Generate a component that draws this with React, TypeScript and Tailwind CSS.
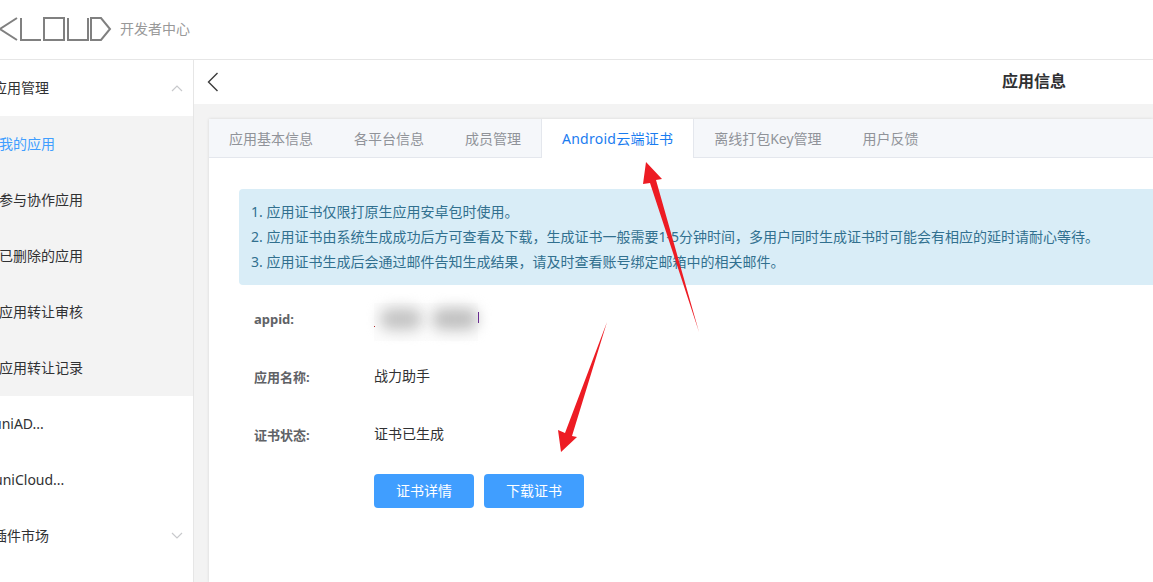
const menuRows = [
  { label: "我的应用", active: true },
  { label: "参与协作应用" },
  { label: "已删除的应用" },
  { label: "应用转让审核" },
  { label: "应用转让记录" },
];

const tabs = ["应用基本信息", "各平台信息", "成员管理", "Android云端证书", "离线打包Key管理", "用户反馈"];

function Logo() {
  return (
    <svg width="112" height="26" viewBox="0 0 112 26" fill="none" stroke="#808080" strokeWidth="2" className="shrink-0">
      <path d="M17 2 L0 13 L17 24" />
      <path d="M21 2 V24 H41" />
      <path d="M44 2 H64 V24 H44 Z" />
      <path d="M68 2 V24 H88 V2" />
      <path d="M91 2 H101 L110 13 L101 24 H91 Z" />
    </svg>
  );
}

function Chevron({ up }: { up?: boolean }) {
  return (
    <svg width="12" height="8" viewBox="0 0 12 8" fill="none" stroke="#c8c9cc" strokeWidth="1.2">
      <path d={up ? "M1 7 L6 2 L11 7" : "M1 1 L6 6 L11 1"} />
    </svg>
  );
}

function SideItem({ label, left = -1, chevron }: { label: string; left?: number; chevron?: "up" | "down" }) {
  return (
    <div className="h-14 flex items-center justify-between pr-[10px] text-sm text-[#303133]">
      <span style={{ marginLeft: left }}>{label}</span>
      {chevron && <Chevron up={chevron === "up"} />}
    </div>
  );
}

function InfoRow({ label, children }: { label: string; children: React.ReactNode }) {
  return (
    <div className="h-[58px] flex items-center">
      <div className="w-[135px] pl-[15px] text-[13px] font-bold text-[#606266]">{label}</div>
      <div className="text-sm text-[#303133] -translate-y-[2px]">{children}</div>
    </div>
  );
}

export default function App() {
  return (
    <div
      className="relative w-[1153px] h-[582px] overflow-hidden bg-white"
      style={{ fontFamily: '"Noto Sans", "Noto Sans CJK SC", sans-serif' }}
    >
      {/* Header */}
      <header className="h-[60px] flex items-center border-b border-[#e6e6e6] pb-[1px]">
        <Logo />
        <span className="ml-[8px] text-sm text-[#999999]">开发者中心</span>
      </header>

      <div className="flex h-[522px]">
        {/* Sidebar */}
        <aside className="w-[194px] shrink-0 border-r border-[#e6e6e6]">
          <SideItem label="应用管理" left={-7} chevron="up" />
          <div className="bg-[#f3f3f3]">
            {menuRows.map((row) => (
              <div
                key={row.label}
                className={`h-14 flex items-center -ml-[1px] pb-[1px] text-sm ${row.active ? "text-[#409eff]" : "text-[#303133]"}`}
              >
                {row.label}
              </div>
            ))}
          </div>
          <SideItem label="uniAD..." left={-7} />
          <SideItem label="uniCloud..." left={-6} />
          <SideItem label="插件市场" left={-7} chevron="down" />
        </aside>

        {/* Main */}
        <main className="flex-1 bg-[#f3f3f3]">
          <div className="relative h-[44px] bg-white flex items-center justify-end pr-[87px]">
            <svg className="absolute left-[13px] top-[12px]" width="12" height="20" viewBox="0 0 12 20" fill="none" stroke="#3c3c3c" strokeWidth="1.4">
              <path d="M10.5 1 L1.5 10 L10.5 19" />
            </svg>
            <span className="-translate-y-[1px] text-base font-bold text-[#303133]">应用信息</span>
          </div>

          <div className="ml-[15px] mt-[15px] h-[463px] bg-white shadow-[0_0_3px_rgba(0,0,0,0.12)]">
            <div className="h-[39px] flex bg-[#f5f7fa] border-b border-[#e4e7ed]">
              {tabs.map((tab) => (
                <div
                  key={tab}
                  className={
                    tab === "Android云端证书"
                      ? "h-[39px] -ml-[1px] px-[20px] pt-[1px] flex items-center text-sm tracking-[0.25px] text-[#1a7cf0] bg-white border-x border-[#e4e7ed]"
                      : "h-[38px] -ml-[1px] px-[20px] pt-[2px] flex items-center text-sm text-[#909399] border-x border-transparent"
                  }
                >
                  {tab}
                </div>
              ))}
            </div>

            <div className="pl-[30px] pt-[31px]">
              <div className="h-[96px] rounded-l-[4px] bg-[#d9edf7] pl-[12px] pt-[10px] text-sm leading-[25px] text-[#31708f] whitespace-nowrap overflow-hidden">
                <p>1. 应用证书仅限打原生应用安卓包时使用。</p>
                <p>2. 应用证书由系统生成成功后方可查看及下载，生成证书一般需要1-5分钟时间，多用户同时生成证书时可能会有相应的延时请耐心等待。</p>
                <p>3. 应用证书生成后会通过邮件告知生成结果，请及时查看账号绑定邮箱中的相关邮件。</p>
              </div>

              <div className="mt-[6px]">
                <InfoRow label="appid:">
                  <div className="relative w-[104px] h-[20px]">
                    <div className="absolute left-0 -top-[5px] w-[104px] h-[38px] bg-[#fcfcfc]" />
                    <div className="absolute left-[6px] top-0 w-[42px] h-[22px] rounded-full bg-[#c4c4c4] blur-[7px]" />
                    <div className="absolute left-[58px] top-0 w-[46px] h-[22px] rounded-full bg-[#c0c0c0] blur-[7px]" />
                    <div className="absolute left-[104px] top-[4px] w-[1px] h-[11px] bg-[#6a2c91]" />
                    <div className="absolute left-0 top-[18px] w-[1px] h-[1px] bg-[#b03030]" />
                  </div>
                </InfoRow>
                <InfoRow label="应用名称:">战力助手</InfoRow>
                <InfoRow label="证书状态:">证书已生成</InfoRow>
              </div>

              <div className="mt-[9px] ml-[135px] flex gap-[10px]">
                <button className="w-[100px] h-[34px] rounded-[4px] bg-[#409eff] text-sm text-white">证书详情</button>
                <button className="w-[100px] h-[34px] rounded-[4px] bg-[#409eff] text-sm text-white">下载证书</button>
              </div>
            </div>
          </div>
        </main>
      </div>

      {/* Red annotation arrows on top of the screenshot */}
      <svg className="absolute left-0 top-0 pointer-events-none" width="1153" height="582" viewBox="0 0 1153 582">
        <path d="M646 162 L662 179 L656 180 L699 332 L650 183 L643 184 Z" fill="#ed1c24" />
        <path d="M607 322 L572 436 L577 437 L561 452 L558 430 L565 433 Z" fill="#ed1c24" />
      </svg>
    </div>
  );
}
